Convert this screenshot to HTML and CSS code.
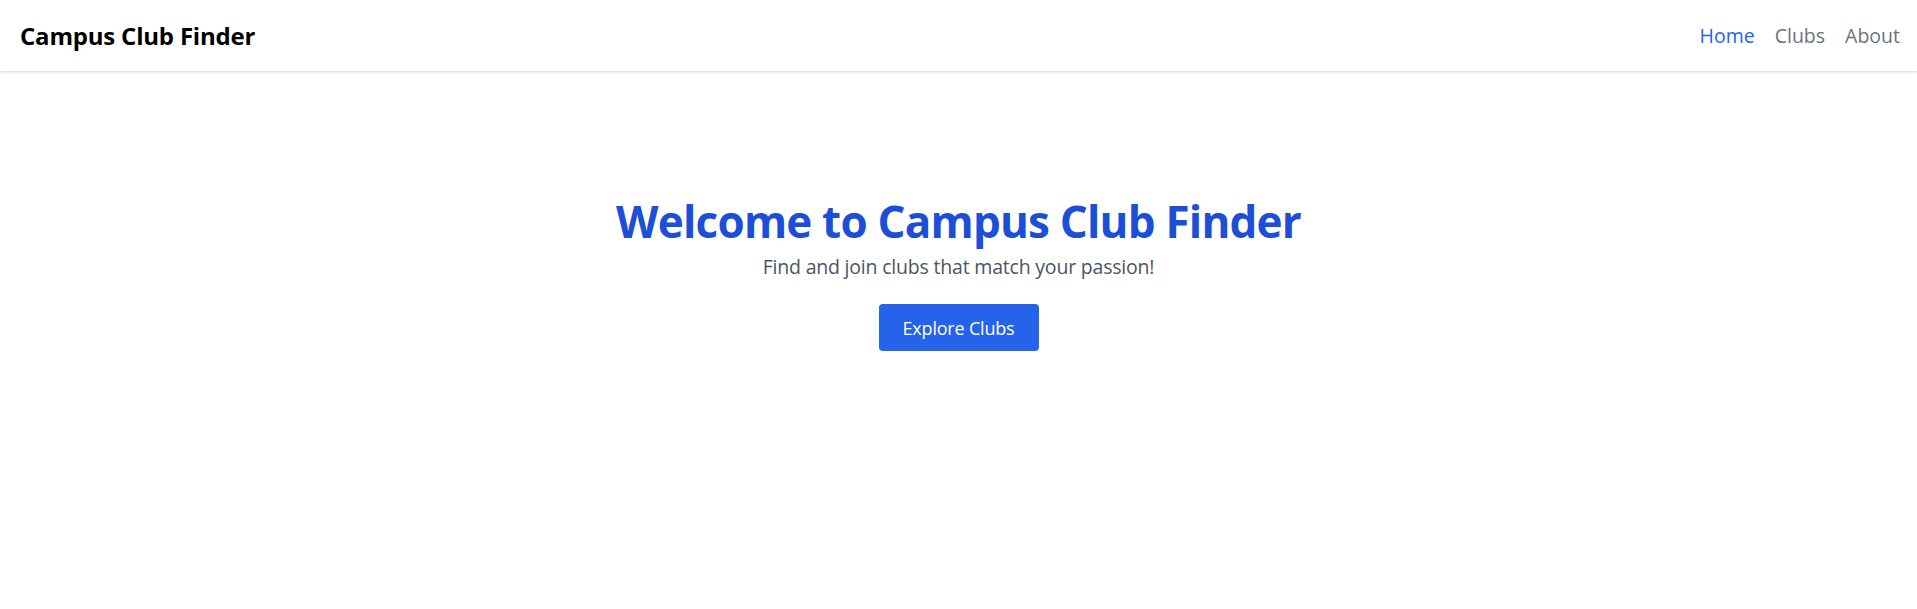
FILE: index.html
```html
<!DOCTYPE html>
<html lang="en">
<head>
<meta charset="utf-8">
<title>Campus Club Finder</title>
<link rel="stylesheet" href="styles.css">
</head>
<body>
<header class="topbar">
  <div class="brand">Campus Club Finder</div>
  <nav class="nav">
    <a class="nav-link active" href="#">Home</a>
    <a class="nav-link" href="#">Clubs</a>
    <a class="nav-link" href="#">About</a>
  </nav>
</header>
<main class="hero">
  <h1 class="hero-title">Welcome to Campus Club Finder</h1>
  <p class="hero-sub">Find and join clubs that match your passion!</p>
  <a class="btn" href="#">Explore Clubs</a>
</main>
</body>
</html>
```

FILE: styles.css
```css
* { box-sizing: border-box; }
html, body { margin: 0; padding: 0; background: #ffffff; }
body {
  font-family: "Open Sans", "Noto Sans", "Liberation Sans", sans-serif;
  color: #111827;
}
.topbar {
  height: 71px;
  display: flex;
  align-items: center;
  justify-content: space-between;
  padding: 0 17px 0 20px;
  background: #ffffff;
  box-shadow: 0 1px 3px rgba(0,0,0,0.12), 0 1px 2px rgba(0,0,0,0.06);
}
.brand {
  font-size: 24px;
  font-weight: 700;
  color: #000000;
  letter-spacing: -0.2px;
}
.nav { display: flex; gap: 20px; }
.nav-link {
  font-size: 19.5px;
  color: #6b7280;
  text-decoration: none;
}
.nav-link.active { color: #2563eb; }
.hero {
  display: flex;
  flex-direction: column;
  align-items: center;
  padding-top: 125px;
}
.hero-title {
  margin: 0;
  font-size: 44px;
  line-height: 50px;
  font-weight: 700;
  color: #1d4ed8;
  letter-spacing: -0.8px;
}
.hero-sub {
  margin: 7px 0 0;
  font-size: 19.5px;
  line-height: 28px;
  color: #4b5563;
  letter-spacing: -0.2px;
}
.btn {
  margin-top: 23px;
  width: 160px;
  height: 47px;
  display: flex;
  align-items: center;
  justify-content: center;
  background: #2563eb;
  color: #ffffff;
  font-size: 18px;
  text-decoration: none;
  border-radius: 4px;
  letter-spacing: -0.2px;
}
```
